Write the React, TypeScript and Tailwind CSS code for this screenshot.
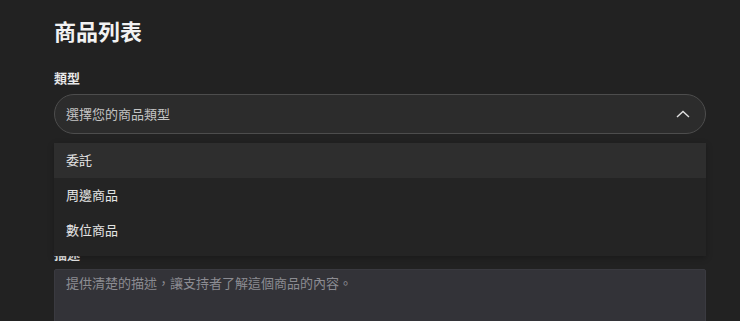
import { useState } from "react";

const options = ["委託", "周邊商品", "數位商品"];

export default function App() {
  const [active, setActive] = useState(0);

  return (
    <div
      className="h-screen overflow-hidden bg-[#222222] text-[#ececec]"
      style={{ fontFamily: '"Noto Sans CJK TC", "Noto Sans", sans-serif' }}
    >
      <div className="pl-[54px] pr-[34px] pt-[14px]">
        <h1 className="text-[22px] leading-[32px] font-bold text-[#f2f2f2]">商品列表</h1>

        <div className="mt-[22px] text-[13px] leading-[20px] font-semibold text-[#e8e8e8]">類型</div>

        <div className="relative mt-[6px]">
          <button className="flex h-[40px] w-full items-center justify-between rounded-full border border-[#4d4d4d] bg-[#2c2c2c] pl-[11px] pr-[15px] text-left">
            <span className="text-[13px] text-[#c4c4c4]">選擇您的商品類型</span>
            <svg width="14" height="8" viewBox="0 0 14 8" fill="none">
              <polyline points="1,7 7,1.5 13,7" stroke="#e0e0e0" strokeWidth="1.4" />
            </svg>
          </button>

          <div className="absolute left-0 right-0 top-[49px] z-10 bg-[#242424] pb-[8px] shadow-[0_2px_6px_rgba(0,0,0,0.25)]">
            {options.map((o, i) => (
              <div
                key={o}
                onMouseEnter={() => setActive(i)}
                className={`flex h-[35px] items-center pl-[12px] pb-[1px] text-[13px] text-[#e4e4e4] ${
                  i === active ? "bg-[#2e2e2e]" : ""
                }`}
              >
                {o}
              </div>
            ))}
          </div>
        </div>

        <div className="mt-[110px] text-[13px] leading-[20px] font-semibold text-[#e8e8e8]">描述</div>
        <div className="mt-[5px] h-[110px] rounded-[2px] border border-[#3a3a40] bg-[#333338] px-[11px] pt-[3px] text-[13px] leading-[20px] text-[#8c8c92]">
          提供清楚的描述，讓支持者了解這個商品的內容。
        </div>
      </div>
    </div>
  );
}
